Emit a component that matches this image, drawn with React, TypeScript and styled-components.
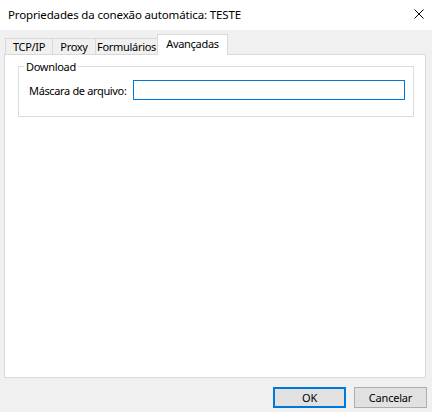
import React from 'react';
import styled, { createGlobalStyle } from 'styled-components';

const GlobalStyle = createGlobalStyle`
  html, body {
    margin: 0;
    padding: 0;
    background: #f0f0f0;
  }
  * {
    box-sizing: border-box;
  }
`;

const Window = styled.div`
  width: 432px;
  height: 412px;
  display: flex;
  flex-direction: column;
  background: #f0f0f0;
  font-family: 'Noto Sans', 'Open Sans', sans-serif;
  font-size: 11px;
  color: #000;
`;

const TitleBar = styled.div`
  height: 30px;
  background: #fff;
  display: flex;
  align-items: center;
  justify-content: space-between;
  padding: 0 0 2px 8px;
`;

const Title = styled.span`
  font-size: 11.5px;
  letter-spacing: -0.15px;
`;

const CloseButton = styled.div`
  width: 28px;
  height: 28px;
  display: flex;
  align-items: center;
  justify-content: center;
  padding-left: 2px;
`;

const Body = styled.div`
  flex: 1;
  display: flex;
  flex-direction: column;
  padding: 4px 6px 0 4px;
`;

const TabStrip = styled.div`
  display: flex;
  align-items: flex-end;
  height: 20px;
  padding-left: 1px;
  position: relative;
  z-index: 1;
`;

const Tab = styled.div<{ $active?: boolean; $width: number }>`
  width: ${(p) => p.$width}px;
  height: ${(p) => (p.$active ? 21 : 16)}px;
  margin-bottom: ${(p) => (p.$active ? -1 : 0)}px;
  background: ${(p) => (p.$active ? '#fff' : '#f0f0f0')};
  border-top: 1px solid #d9d9d9;
  border-left: 1px solid #d9d9d9;
  border-right: ${(p) => (p.$active ? '1px solid #d9d9d9' : 'none')};
  display: flex;
  align-items: center;
  justify-content: center;
  padding-bottom: ${(p) => (p.$active ? 3 : 0)}px;
  font-size: 11px;
  letter-spacing: -0.3px;
  white-space: nowrap;
`;

const Panel = styled.div`
  height: 324px;
  background: #fff;
  border: 1px solid #d9d9d9;
  padding: 4px 11px 0 13px;
`;

const GroupBox = styled.fieldset`
  margin: 0;
  padding: 4px 8px 14px 10px;
  border: 1px solid #dcdcdc;
  height: 58px;
  display: flex;
  align-items: center;
`;

const Legend = styled.legend`
  padding: 0 2px;
  margin-left: -5px;
  font-size: 11px;
  letter-spacing: -0.3px;
`;

const Field = styled.div`
  display: flex;
  align-items: center;
  width: 100%;
  gap: 6px;
`;

const Label = styled.label`
  font-size: 11px;
  letter-spacing: -0.35px;
  white-space: nowrap;
`;

const TextInput = styled.input`
  flex: 1;
  height: 20px;
  border: 1px solid #0078d7;
  outline: none;
  background: #fff;
  font-family: inherit;
  font-size: 11px;
  padding: 0 3px;
`;

const Footer = styled.div`
  display: flex;
  justify-content: flex-end;
  gap: 8px;
  padding: 9px 0 0 0;
  margin-right: -1px;
`;

const Button = styled.button<{ $default?: boolean }>`
  width: 73px;
  height: 21px;
  background: #e1e1e1;
  border: ${(p) => (p.$default ? '2px solid #0078d7' : '1px solid #adadad')};
  font-family: inherit;
  font-size: 11px;
  letter-spacing: -0.2px;
  color: #000;
  padding: 0;
`;

const tabs = [
  { label: 'TCP/IP', width: 47 },
  { label: 'Proxy', width: 43 },
  { label: 'Formulários', width: 62 },
  { label: 'Avançadas', width: 71, active: true },
];

const App: React.FC = () => {
  return (
    <>
      <GlobalStyle />
      <Window>
        <TitleBar>
          <Title>Propriedades da conexão automática: TESTE</Title>
          <CloseButton>
            <svg width="10" height="10" viewBox="0 0 10 10">
              <path d="M0.5 0.5 L9.5 9.5 M9.5 0.5 L0.5 9.5" stroke="#000" strokeWidth="1" />
            </svg>
          </CloseButton>
        </TitleBar>
        <Body>
          <TabStrip>
            {tabs.map((t) => (
              <Tab key={t.label} $active={t.active} $width={t.width}>
                {t.label}
              </Tab>
            ))}
          </TabStrip>
          <Panel>
            <GroupBox>
              <Legend>Download</Legend>
              <Field>
                <Label htmlFor="mask">Máscara de arquivo:</Label>
                <TextInput id="mask" type="text" />
              </Field>
            </GroupBox>
          </Panel>
          <Footer>
            <Button $default>OK</Button>
            <Button>Cancelar</Button>
          </Footer>
        </Body>
      </Window>
    </>
  );
};

export default App;
